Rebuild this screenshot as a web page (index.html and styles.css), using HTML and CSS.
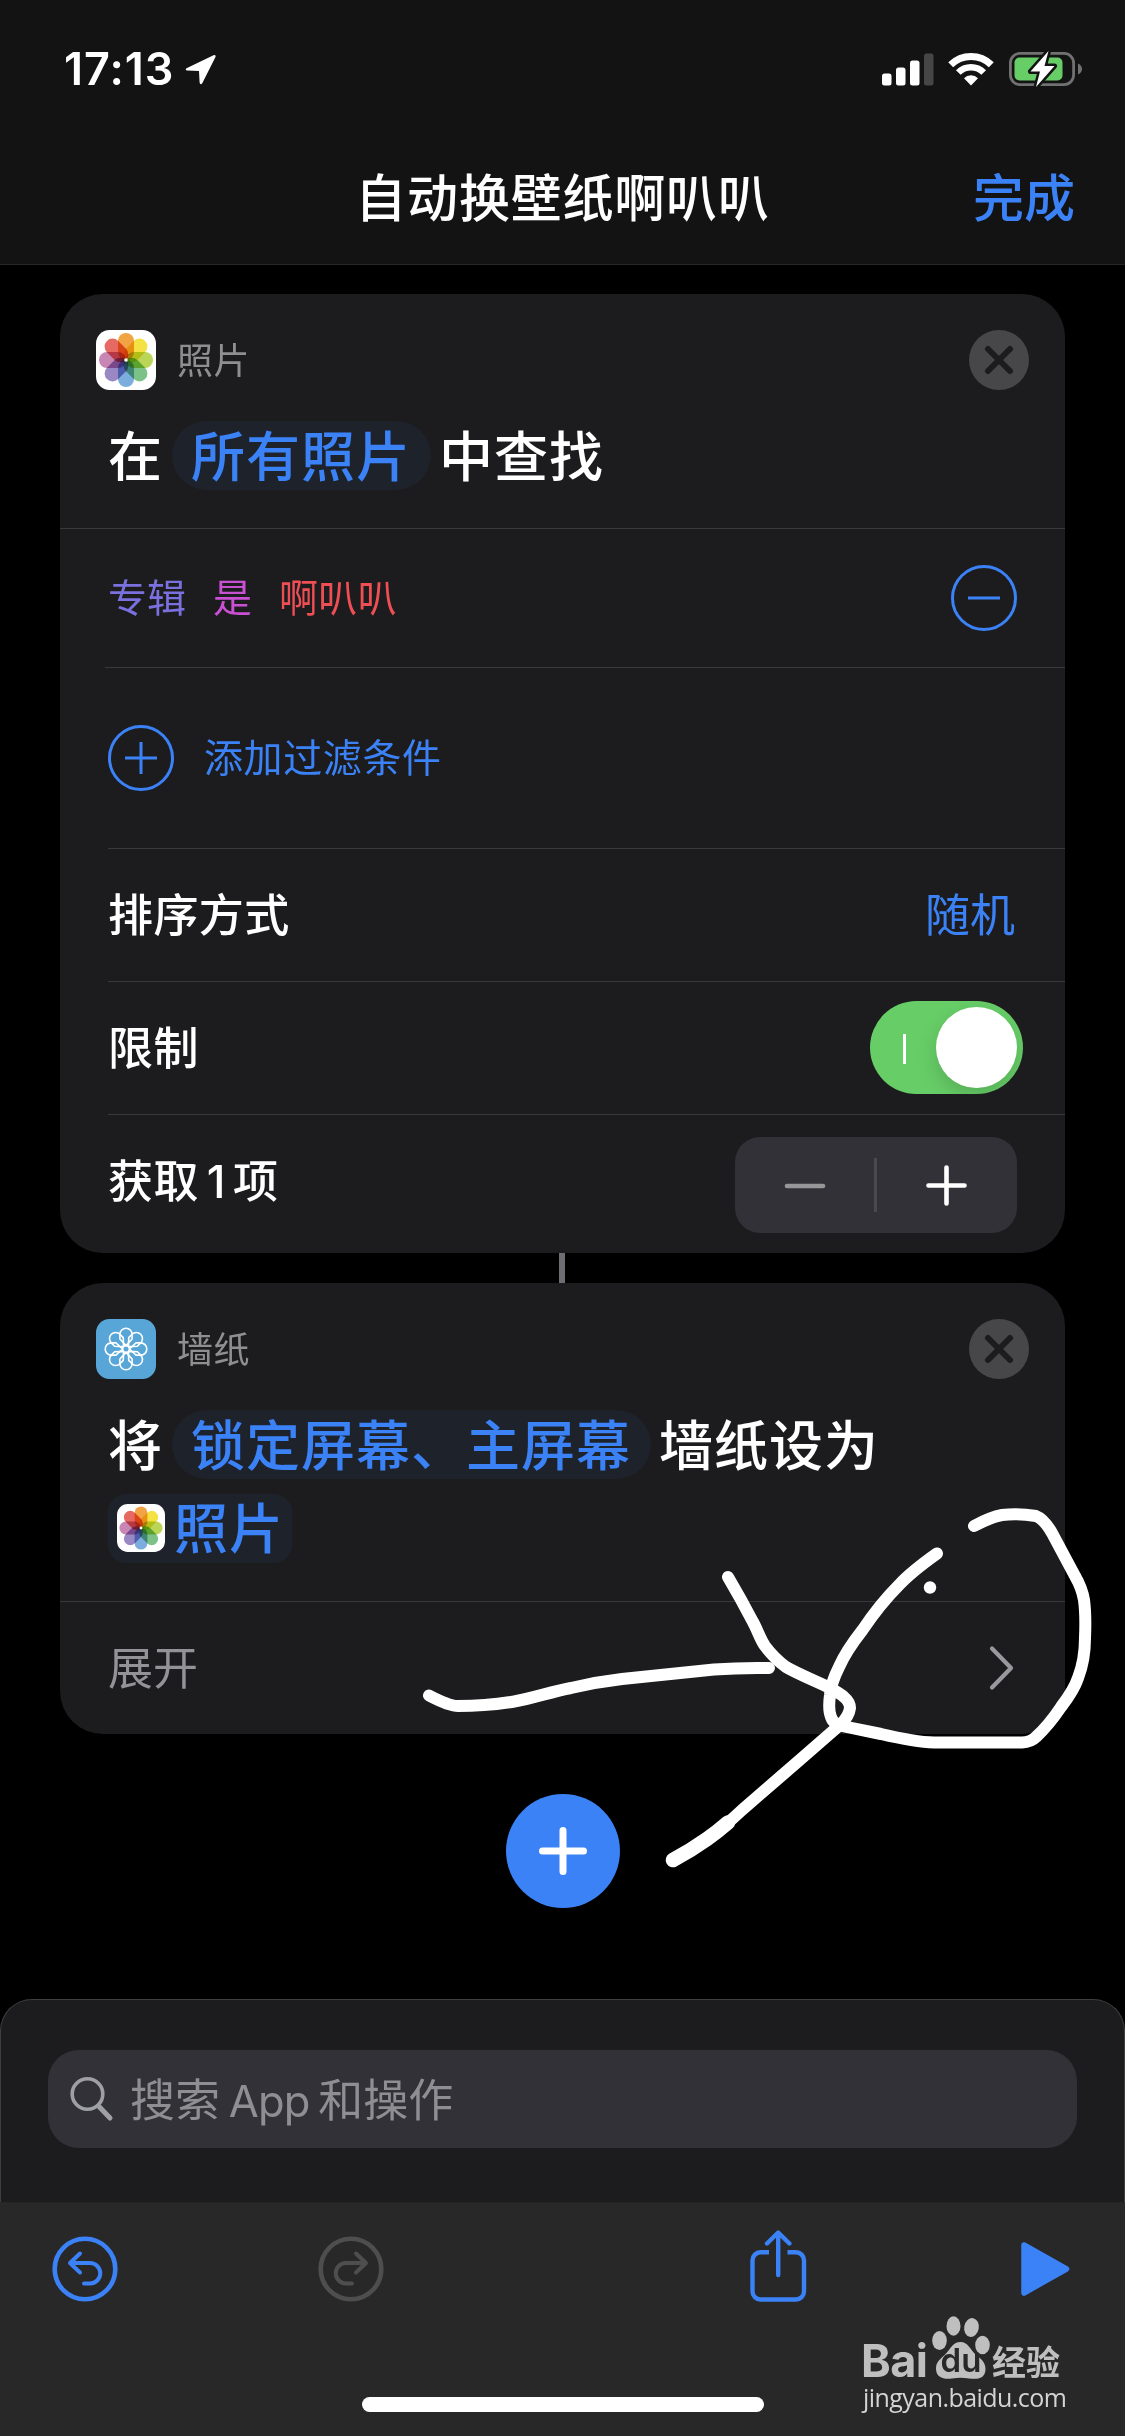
FILE: index.html
```html
<!DOCTYPE html>
<html lang="zh-CN">
<head>
<meta charset="utf-8">
<title>自动换壁纸啊叭叭</title>
<link rel="stylesheet" href="styles.css">
</head>
<body>
<svg class="defs" width="0" height="0" aria-hidden="true">
  <defs>
    <symbol id="photos" viewBox="0 0 60 60">
      <rect width="60" height="60" rx="13.5" fill="#fff"/>
      <g class="petals">
        <rect x="22" y="3" width="16" height="27" rx="8" fill="#f2a445"/>
        <rect x="22" y="3" width="16" height="27" rx="8" fill="#f4e244" transform="rotate(45 30 30)"/>
        <rect x="22" y="3" width="16" height="27" rx="8" fill="#bbd557" transform="rotate(90 30 30)"/>
        <rect x="22" y="3" width="16" height="27" rx="8" fill="#7cc288" transform="rotate(135 30 30)"/>
        <rect x="22" y="3" width="16" height="27" rx="8" fill="#7caedd" transform="rotate(180 30 30)"/>
        <rect x="22" y="3" width="16" height="27" rx="8" fill="#9988c4" transform="rotate(225 30 30)"/>
        <rect x="22" y="3" width="16" height="27" rx="8" fill="#c886b4" transform="rotate(270 30 30)"/>
        <rect x="22" y="3" width="16" height="27" rx="8" fill="#e66a62" transform="rotate(315 30 30)"/>
      </g>
      <circle cx="30" cy="30" r="1.8" fill="#fff"/>
    </symbol>
    <path id="wp-petal" d="M30 26.6 L23.900 20 V15.300 A6.100 6.100 0 0 1 36.100 15.300 V20 Z"/>
  </defs>
</svg>

<header class="header">
  <div class="status">
    <span class="time">17:13</span>
    <svg class="location" width="32" height="31" viewBox="0 0 32 31"><path d="M28.500 1.200 L1.500 14.200 Q-.5 16.200 2.400 16.600 L14 17 L14.600 28.600 Q15.400 31.600 17.400 29 L30.500 3 Q31 .2 28.500 1.200Z" fill="#fff"/></svg>
    <div class="status-right">
      <svg width="52" height="33" viewBox="0 0 52 33"><g fill="#fff"><rect y="20.5" width="9.5" height="12" rx="2.5"/><rect x="14" y="14.5" width="9.5" height="18" rx="2.5"/><rect x="28" y="7.5" width="9.5" height="25" rx="2.5"/><rect x="42" y=".5" width="9.5" height="32" rx="2.5" opacity=".22"/></g></svg>
      <svg class="wifi" width="46" height="34" viewBox="0 0 46 34"><g fill="none" stroke="#fff"><path d="M2.7 12.7 A29 29 0 0 1 43.3 12.7" stroke-width="7"/><path d="M10.3 20.5 A18 18 0 0 1 35.7 20.5" stroke-width="6.6"/></g><path d="M16 26.2 A10 10 0 0 1 30 26.2 L23 33.4Z" fill="#fff"/></svg>
      <svg class="battery" width="74" height="38" viewBox="0 0 74 38"><rect x="1.4" y="3.4" width="63.2" height="31.2" rx="9.5" fill="none" stroke="#717171" stroke-width="2.8"/><path d="M69 13.5 Q73 15.5 73 19 T69 24.5Z" fill="#717171"/><rect x="5.5" y="7.5" width="48" height="23" rx="5" fill="#67ce67"/><path d="M39.5 1 L21.5 21.5 H31 L27 37 L45.500 16 H35.500Z" fill="#fff" stroke="#131313" stroke-width="5" paint-order="stroke" stroke-linejoin="round"/></svg>
    </div>
  </div>
  <div class="nav"><span></span><h1>自动换壁纸啊叭叭</h1><a class="done">完成</a></div>
</header>

<main class="flow">
  <section class="card">
    <div class="card-head">
      <svg width="60" height="60"><use href="#photos"/></svg>
      <span class="app">照片</span>
      <svg class="close" width="60" height="60" viewBox="0 0 60 60"><circle cx="30" cy="30" r="30" fill="#474749"/><path d="M19 19 L41 41 M41 19 L19 41" stroke="#1c1c1e" stroke-width="6" stroke-linecap="round"/></svg>
    </div>
    <div class="sentence first"><span>在</span><span class="pill">所有照片</span><span>中查找</span></div>
    <div class="row filter">
      <span class="c-violet">专辑</span><span class="c-pink">是</span><span class="c-red">啊叭叭</span>
      <svg class="push" width="66" height="66" viewBox="0 0 66 66" fill="none" stroke="#3b82f7" stroke-width="3"><circle cx="33" cy="33" r="31.500"/><path d="M17 33 H49"/></svg>
    </div>
    <div class="row add">
      <svg width="66" height="66" viewBox="0 0 66 66" fill="none" stroke="#3b82f7" stroke-width="3"><circle cx="33" cy="33" r="31.500"/><path d="M17 33 H49 M33 17 V49"/></svg>
      <span>添加过滤条件</span>
    </div>
    <div class="row"><span class="label">排序方式</span><span class="value push">随机</span></div>
    <div class="row"><span class="label">限制</span><span class="toggle push"><i class="tick"></i><i class="knob"></i></span></div>
    <div class="row last"><span class="label">获取<span class="num">1</span>项</span>
      <div class="stepper push">
        <svg width="139" height="96" viewBox="0 0 139 96"><path d="M52 49 H88" stroke="#97979a" stroke-width="4.600" stroke-linecap="round"/></svg>
        <i></i>
        <svg width="140" height="96" viewBox="0 0 140 96"><path d="M51.500 48.500 H87.500 M69.500 30.500 V66.500" stroke="#fff" stroke-width="4.600" stroke-linecap="round"/></svg>
      </div>
    </div>
  </section>

  <div class="connector"></div>

  <section class="card">
    <div class="card-head">
      <svg width="60" height="60" viewBox="0 0 60 60"><rect width="60" height="60" rx="13.500" fill="#58a6d8"/>
        <g fill="none" stroke="#fff" stroke-width="1.600" stroke-linejoin="round">
          <use href="#wp-petal"/><use href="#wp-petal" transform="rotate(45 30 30)"/><use href="#wp-petal" transform="rotate(90 30 30)"/><use href="#wp-petal" transform="rotate(135 30 30)"/><use href="#wp-petal" transform="rotate(180 30 30)"/><use href="#wp-petal" transform="rotate(225 30 30)"/><use href="#wp-petal" transform="rotate(270 30 30)"/><use href="#wp-petal" transform="rotate(315 30 30)"/>
          <circle cx="30" cy="30" r="3.400"/>
        </g></svg>
      <span class="app">墙纸</span>
      <svg class="close" width="60" height="60" viewBox="0 0 60 60"><circle cx="30" cy="30" r="30" fill="#474749"/><path d="M19 19 L41 41 M41 19 L19 41" stroke="#1c1c1e" stroke-width="6" stroke-linecap="round"/></svg>
    </div>
    <div class="sentence"><span>将</span><span class="pill">锁定屏幕、主屏幕</span><span>墙纸设为</span></div>
    <div class="sentence second"><span class="token"><svg width="48" height="48"><use href="#photos" width="48" height="48"/></svg><span>照片</span></span></div>
    <div class="row expand"><span>展开</span>
      <svg class="push" width="26" height="46" viewBox="0 0 26 46"><path d="M3 3.500 L22 23 L3 42.500" fill="none" stroke="#98989d" stroke-width="4.200" stroke-linecap="round" stroke-linejoin="round"/></svg>
    </div>
  </section>

  <svg class="fab" width="114" height="114" viewBox="0 0 114 114"><circle cx="57" cy="57" r="57" fill="#3b82f7"/><path d="M36.500 57 H77.500 M57 36.500 V77.500" stroke="#fff" stroke-width="7" stroke-linecap="round"/></svg>
</main>

<section class="sheet">
  <div class="search">
    <svg width="44" height="46" viewBox="0 0 44 46" fill="none" stroke="#9f9fa6" stroke-linecap="round"><circle cx="17.500" cy="18" r="15.300" stroke-width="3.600"/><path d="M29 30.500 L40 42" stroke-width="5"/></svg>
    <span class="hint">搜索 <span class="latin">App</span> 和操作</span>
  </div>
</section>

<footer class="toolbar">
  <div class="tools">
    <svg class="undo" width="66" height="66" viewBox="0 0 66 66" fill="none" stroke="#3b82f7" stroke-linecap="round" stroke-linejoin="round"><circle cx="33" cy="33" r="30.300" stroke-width="4.600"/><path d="M28 17.500 L18 27 L28 36.500 M18 27 H38 A10 10 0 0 1 38 47.500 H32" stroke-width="4"/></svg>
    <svg class="redo" width="66" height="66" viewBox="0 0 66 66" fill="none" stroke="#4e4e4f" stroke-linecap="round" stroke-linejoin="round"><circle cx="33" cy="33" r="30.300" stroke-width="4.600"/><path d="M38 17.500 L48 27 L38 36.500 M48 27 H28 A10 10 0 0 0 28 47.500 H34" stroke-width="4"/></svg>
    <svg class="share" width="57" height="72" viewBox="0 0 57 72" fill="none" stroke="#3b82f7" stroke-width="4.400"><path d="M19 22.300 H10.500 A8 8 0 0 0 2.500 30.300 V61.500 A8 8 0 0 0 10.500 69.500 H46 A8 8 0 0 0 54 61.500 V30.300 A8 8 0 0 0 46 22.300 H37.500"/><path d="M28.200 45 V3 M17 13.500 L28.200 2.500 L39.400 13.500" stroke-linecap="round" stroke-linejoin="round"/></svg>
    <svg class="play" width="49" height="56" viewBox="0 0 49 56"><path d="M3 4 L45.500 28 L3 52Z" fill="#3b82f7" stroke="#3b82f7" stroke-width="5.500" stroke-linejoin="round"/></svg>
  </div>
  <div class="home"></div>
</footer>

<svg class="scribble" width="1125" height="2436" viewBox="0 0 1125 2436" fill="none" stroke="#fff" stroke-width="12" stroke-linecap="round" stroke-linejoin="round">
  <path d="M429 1695.500 Q449 1706 458 1706 Q486 1706 513 1701.700 C534 1698 550 1692 571 1688 Q596 1682 622 1679 Q670 1674 714 1669.500 Q740 1667.500 769 1668"/>
  <path d="M728 1577 Q741 1599 753 1622 C758 1631 760 1639 765 1646 Q774 1658 786 1667 C800 1675 816 1681 830 1688 Q841 1694 844 1697 Q850 1702 850 1708 Q849 1716 841 1724 L802 1758 L742 1810 Q724 1827 707 1839 Q690 1851 673 1860"/>
  <path d="M728 1822.500 Q717 1832 707 1839 Q690 1851 673 1860" stroke-width="14.500"/>
  <path d="M937 1553.500 Q911 1572 899 1585 Q880 1604 862.500 1630 Q846 1651 839 1667 Q831 1683 830 1695 Q828 1710 831 1717 Q833 1724 842 1726 L881 1734 Q915 1742 934 1742.500 H1022 Q1031 1742 1036 1737 Q1049 1725 1061 1707 Q1074 1690 1078 1678 Q1085 1660 1085 1638 Q1086 1615 1084 1600 Q1082 1588 1075 1576 L1052 1533 Q1044 1519 1036 1516 Q1018 1513 1002 1515 Q991 1517 974 1526"/>
  <circle cx="930" cy="1587.500" r="6.200" fill="#fff" stroke="none"/>
</svg>

<div class="watermark">
  <div class="brand"><span class="bai">Bai</span>
    <span class="paw"><svg width="60" height="66" viewBox="0 0 60 66" fill="#bfbfbf"><ellipse cx="8.500" cy="24.500" rx="7.300" ry="9.500"/><ellipse cx="22.500" cy="10" rx="7" ry="9.700"/><ellipse cx="40.500" cy="11.500" rx="7.300" ry="9.500" transform="rotate(10 40.500 11.500)"/><ellipse cx="51.500" cy="29" rx="7.300" ry="9.300"/><path d="M29.500 26 C37 26 39 33 44 38 C50 43 54.500 46 54.500 53 C54.500 63 46 63.500 38 62.500 C32 61.500 27 61.500 21 62.500 C13 63.500 5 62 5 52.500 C5 45 10 43 15 37.500 C20 32 22 26 29.500 26Z"/></svg><b>du</b></span>
    <span class="jy">经验</span></div>
  <div class="url">jingyan.baidu.com</div>
</div>
</body>
</html>
```
FILE: styles.css
```css
* { box-sizing: border-box; }
body {
  margin: 0;
  width: 1125px;
  height: 2436px;
  display: flex;
  flex-direction: column;
  position: relative;
  overflow: hidden;
  background: #000;
  color: #fff;
  font-family: Inter, "Noto Sans CJK SC", sans-serif;
}
svg { display: block; flex: none; }
.defs { position: absolute; }
.petals { isolation: isolate; }
.petals rect { mix-blend-mode: multiply; }

.header { height: 265px; flex: none; background: #131313; border-bottom: 1px solid #272727; }
.status { height: 138px; display: flex; align-items: center; padding: 0 42px 0 64px; }
.time { font-size: 45px; font-weight: 600; line-height: 50px; width: 121px; white-space: nowrap; letter-spacing: 1px; }
.status-right { margin-left: auto; display: flex; align-items: center; }
.wifi { margin-left: 14px; }
.battery { margin-left: 15px; }
.nav { height: 122px; display: grid; grid-template-columns: 1fr auto 1fr; align-items: center; padding-right: 50px; padding-left: 50px; }
.nav h1 { margin: 0; font-size: 51px; font-weight: 500; line-height: 60px; letter-spacing: .8px; }
.done { justify-self: end; color: #3b82f7; font-size: 51px; font-weight: 500; line-height: 60px; }

.flow { flex: 1; display: flex; flex-direction: column; align-items: center; padding-top: 29px; }
.card { width: 1005px; background: #1c1c1e; border-radius: 43px; overflow: hidden; flex: none; }
.card-head { height: 96px; padding: 36px 36px 0; display: flex; align-items: center; }
.app { margin-left: 21px; padding-top: 2px; font-size: 36px; letter-spacing: .4px; color: #8f8f91; line-height: 44px; }
.close { margin-left: auto; }
.sentence {
  display: flex;
  align-items: center;
  height: 69px;
  margin-top: 31px;
  padding-left: 48px;
  font-size: 54px;
  font-weight: 500;
  letter-spacing: 1px;
  line-height: 65px;
  white-space: nowrap;
}
.sentence > span { padding-top: 4px; }
.sentence.first { margin-bottom: 38px; }
.sentence.second { margin: 15px 0 38px; }
.sentence > .pill { background: #1e222a; color: #3b82f7; border-radius: 35px; padding: 4px 20px 0 19px; margin: 0 8px 0 9px; }
.sentence > .token { display: flex; align-items: center; height: 69px; width: 184px; padding: 0 0 0 9px; gap: 9px; background: #1e222a; color: #3b82f7; border-radius: 18px; }
.token svg { margin-bottom: 1px; }
.token span { padding-top: 1px; }

.row { position: relative; display: flex; align-items: center; height: 133px; padding: 0 48px; font-size: 45px; line-height: 60px; }
.row::before { content: ""; position: absolute; left: 48px; right: 0; top: 0; height: 1px; background: #39393b; }
.push { margin-left: auto; }
.filter { height: 139px; font-size: 39px; gap: 27px; }
.filter::before, .expand::before { left: 0; }
.add { height: 181px; font-size: 39px; letter-spacing: .6px; gap: 30px; color: #3b82f7; }
.add::before { left: 45px; }
.c-violet { color: #7a70de; }
.c-pink { color: #c94fd3; }
.c-red { color: #ee4f55; letter-spacing: .3px; }
.label { font-weight: 500; letter-spacing: .4px; padding-top: 2px; }
.num { margin: 0 7px 0 8px; }
.value { color: #3b82f7; padding: 2px 2px 0 0; }
.toggle { width: 153px; height: 93px; margin-right: -6px; border-radius: 47px; background: #67ce67; padding: 0 6px 0 33px; display: flex; align-items: center; justify-content: space-between; overflow: hidden; }
.tick { width: 3px; height: 30px; background: #fff; margin-top: 3px; }
.knob { width: 81px; height: 81px; border-radius: 50%; background: #fff; box-shadow: 0 8px 20px rgba(0, 0, 0, .16); }
.last { height: 139px; padding-top: 2px; }
.last .label { padding: 0 0 5px; }
.stepper { width: 282px; height: 96px; background: #323137; border-radius: 25px; display: flex; align-items: center; }
.stepper i { width: 3px; height: 54px; background: #4a4a4e; }

.connector { width: 6px; height: 30px; background: #6d6d73; flex: none; margin-right: 1px; }
.expand { color: #929297; padding-right: 50px; }
.expand span { padding-top: 2px; }
.fab { margin-top: 60px; }

.sheet { height: 203px; flex: none; border: 1px solid #3f3f40; border-bottom: 0; border-radius: 32px 32px 0 0; background: #1c1c1e; padding: 50px 47px 0; }
.search { height: 98px; border-radius: 31px; background: #323137; padding-left: 22px; display: flex; align-items: center; gap: 16px; color: #8e8e93; font-size: 45px; line-height: 60px; }
.hint { padding-top: 3px; white-space: nowrap; word-spacing: -4px; }
.latin { font-size: 43.500px; letter-spacing: -.8px; }

.toolbar { height: 234px; flex: none; background: #282829; display: flex; flex-direction: column; align-items: center; border-top: 1px solid #252526; }
.tools { width: 100%; height: 131px; display: flex; align-items: center; padding: 0 55px 0 52px; }
.redo { margin-left: 200px; }
.share { margin-left: 366px; margin-bottom: 5px; }
.play { margin-left: auto; }
.home { width: 402px; height: 15px; border-radius: 8px; background: #fff; margin-top: 63px; }

.scribble { position: absolute; left: 0; top: 0; }
.watermark { position: absolute; left: 863px; top: 2316px; width: 202px; color: #bfbfbf; }
.brand { display: flex; align-items: flex-end; height: 66px; line-height: 44px; }
.bai { width: 68px; font-size: 45px; font-weight: 700; letter-spacing: -.6px; line-height: 44px; height: 43px; margin-left: -2px; margin-right: 2px; }
.paw { position: relative; width: 60px; height: 66px; }
.paw b { position: absolute; left: 0; width: 60px; text-align: center; top: 25px; font-size: 33px; line-height: 38px; font-weight: 600; color: #282829; }
.jy { font-family: "Noto Sans CJK SC", sans-serif; font-weight: 700; font-size: 34px; line-height: 38px; margin: 0 0 2px 1px; white-space: nowrap; }
.url { font-family: "Open Sans", sans-serif; font-size: 25px; letter-spacing: -.55px; line-height: 30px; color: #d4d4d4; white-space: nowrap; }
```
